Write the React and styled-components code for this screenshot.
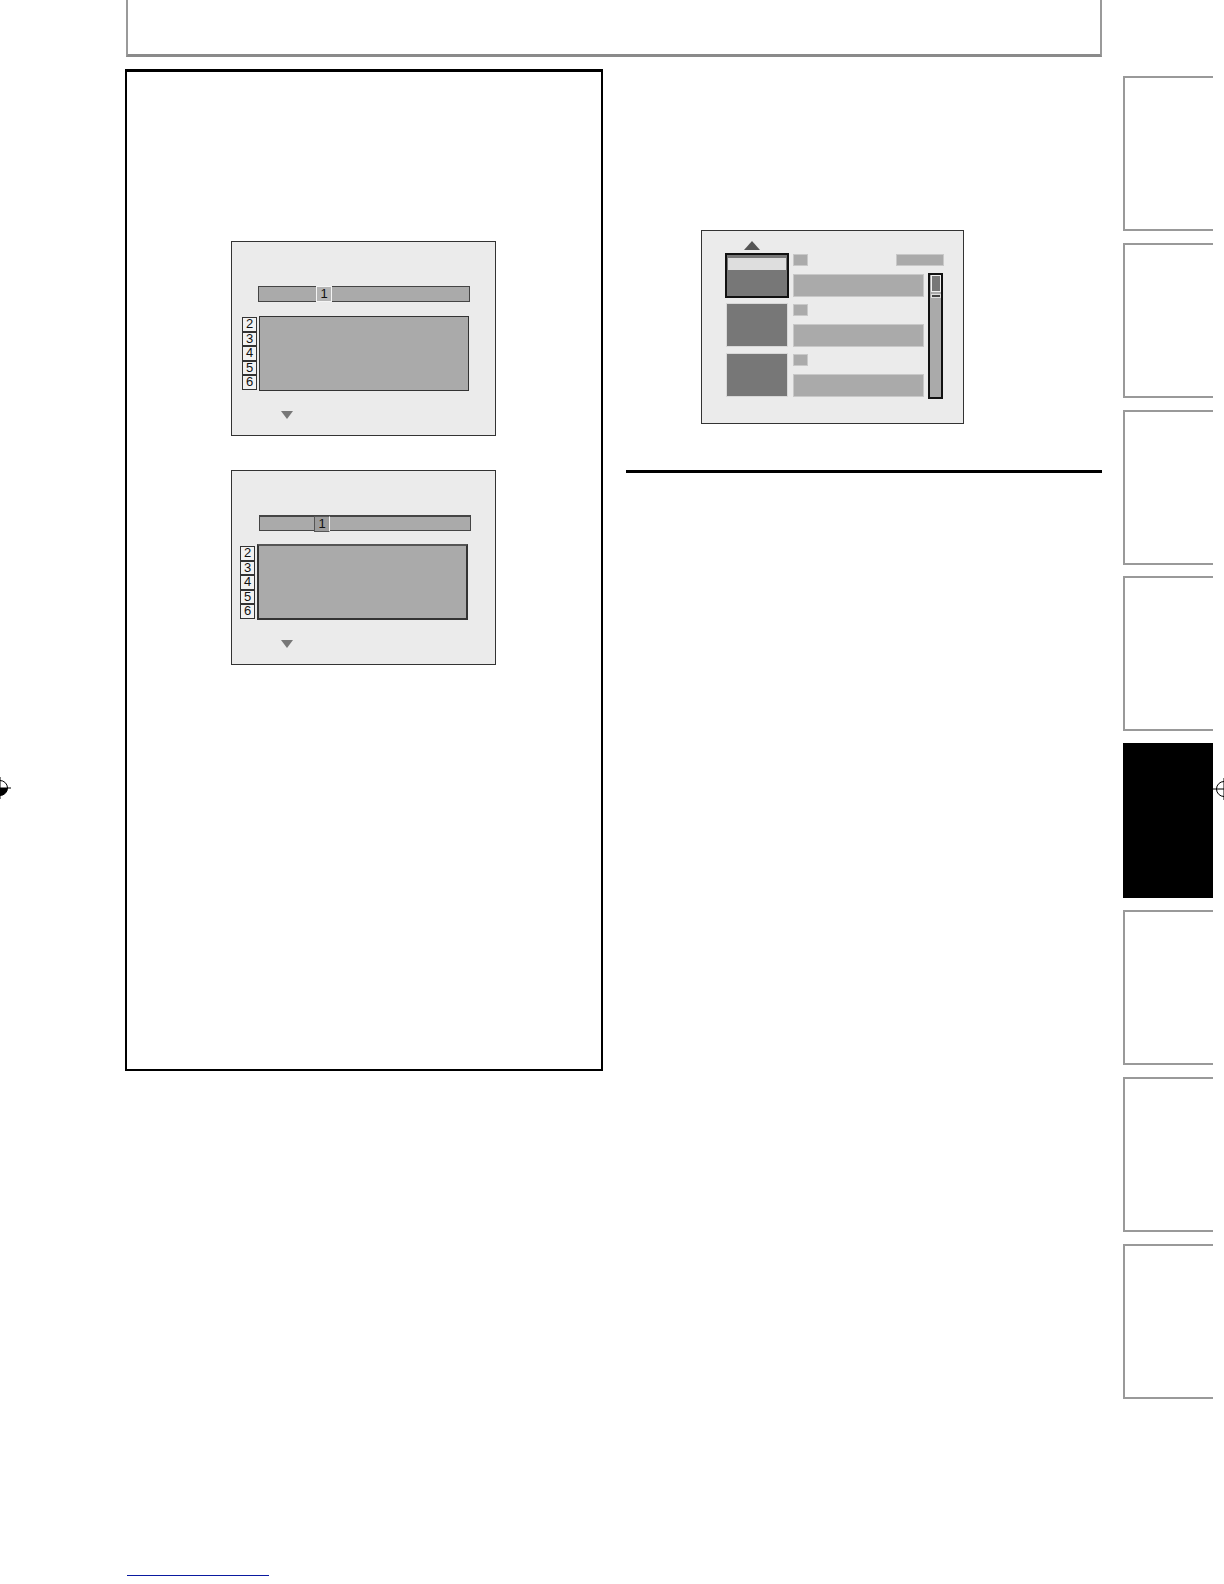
import React from "react"
import styled, { createGlobalStyle } from "styled-components"

const GlobalStyle = createGlobalStyle`
	html, body {
		margin: 0;
		padding: 0;
		background: #fff;
	}
	body {
		font-family: "Liberation Sans", Arial, sans-serif;
	}
	* {
		box-sizing: border-box;
	}
`

const Page = styled.div`
	position: relative;
	width: 1224px;
	height: 1584px;
	padding-left: 125px;
	display: flex;
	overflow: hidden;
	background: #fff;
`

const Main = styled.div`
	width: 977px;
	height: 100%;
	display: flex;
	flex-direction: column;
`

const Header = styled.div`
	margin-left: 1px;
	width: 976px;
	height: 57px;
	border: 2px solid #9a9a9a;
	border-top: none;
	border-bottom: 3px solid #8a8a8a;
`

const Body = styled.div`
	margin-top: 12px;
	display: flex;
	gap: 23px;
`

const NoteBox = styled.div`
	width: 478px;
	height: 1002px;
	border: 2px solid #000;
	border-top-width: 3px;
	padding: 169px 0 0 104px;
	display: flex;
	flex-direction: column;
	gap: 34px;
`

const RightCol = styled.div`
	width: 476px;
	display: flex;
	flex-direction: column;
`

const Screen = styled.div`
	width: ${(p) => p.$w || 265}px;
	height: ${(p) => p.$h || 195}px;
	background: #ebebeb;
	border: 1px solid #333;
	display: flex;
	flex-direction: column;
`

/* ---- title/chapter screen ---- */

const TitleBar = styled.div`
	margin: 44px 0 0 ${(p) => p.$left}px;
	width: 212px;
	height: 16px;
	background: #aaa;
	border: 1px solid #444;
	border-top-width: ${(p) => (p.$dark ? 2 : 1)}px;
	display: flex;
	padding-left: ${(p) => p.$tag}px;
`

const Tag = styled.span`
	width: 16px;
	height: 16px;
	margin-top: -1px;
	background: ${(p) => (p.$dark ? "#9c9c9c" : "#b4b4b4")};
	border: 1px solid ${(p) => (p.$dark ? "#555" : "#f4f4f4")};
	border-right-color: #f4f4f4;
	font-size: 13px;
	line-height: 14px;
	text-align: center;
	color: #111;
`

const ListRow = styled.div`
	margin: ${(p) => p.$top}px 0 0 ${(p) => p.$left}px;
	display: flex;
	gap: 2px;
`

const Numbers = styled.div`
	display: flex;
	flex-direction: column;
	padding-top: ${(p) => p.$pad}px;
`

const Num = styled.span`
	width: 15px;
	height: 14.6px;
	background: #f2f2f2;
	border: 1px solid #333;
	font-size: 13px;
	line-height: 12.6px;
	text-align: center;
	color: #111;
`

const Panel = styled.div`
	width: ${(p) => p.$w}px;
	height: ${(p) => p.$h}px;
	background: #aaa;
	border: ${(p) => p.$bw}px solid #333;
	border-top-color: ${(p) => (p.$bw > 1 ? "#555" : "#333")};
`

const DownArrow = styled.div`
	margin: 20px 0 0 49px;
	width: 0;
	height: 0;
	border-left: 6.5px solid transparent;
	border-right: 6.5px solid transparent;
	border-top: 8px solid #777;
`

const ChapterScreen = ({ barLeft, tag, listTop, listLeft, numPad, panel, dark }) => (
	<Screen>
		<TitleBar $left={barLeft} $tag={tag} $dark={dark}>
			<Tag $dark={dark}>1</Tag>
		</TitleBar>
		<ListRow $top={listTop} $left={listLeft}>
			<Numbers $pad={numPad}>
				{[2, 3, 4, 5, 6].map((n) => (
					<Num key={n}>{n}</Num>
				))}
			</Numbers>
			<Panel $w={panel.w} $h={panel.h} $bw={panel.bw} />
		</ListRow>
		<DownArrow />
	</Screen>
)

/* ---- browser screen ---- */

const BrowserScreen = styled(Screen)`
	margin: 161px 0 0 75px;
`

const UpArrow = styled.div`
	margin: 10px 0 0 42px;
	width: 0;
	height: 0;
	border-left: 8.5px solid transparent;
	border-right: 8.5px solid transparent;
	border-bottom: 9px solid #555;
`

const BrowserBody = styled.div`
	margin: 3px 0 0 23px;
	display: flex;
	gap: 4px;
`

const Entries = styled.div`
	display: flex;
	flex-direction: column;
	gap: 5px;
`

const Entry = styled.div`
	display: flex;
	gap: 4px;
	height: 45px;
`

const Thumb = styled.div`
	width: ${(p) => (p.$sel ? 64 : 62)}px;
	height: ${(p) => (p.$sel ? 45 : 44)}px;
	margin: ${(p) => (p.$sel ? "0" : "0 1px")};
	background: #777;
	border: ${(p) => (p.$sel ? "2px solid #111" : "1px solid #d8d8d8")};
	padding: 3px 1px 0;
`

const ThumbLabel = styled.div`
	height: 12px;
	background: #dedede;
`

const Info = styled.div`
	width: 131px;
	padding-top: 1px;
	display: flex;
	flex-direction: column;
	gap: 8px;
`

const InfoHead = styled.div`
	width: ${(p) => (p.$wide ? 151 : 131)}px;
	height: 12px;
	display: flex;
	justify-content: space-between;
`

const Chip = styled.span`
	width: ${(p) => p.$w}px;
	height: 12px;
	background: #aaa;
	border: 1px solid #c8c8c8;
`

const InfoBar = styled.div`
	height: 23px;
	background: #aaa;
	border: 1px solid #c8c8c8;
`

const Scroll = styled.div`
	margin-top: 20px;
	width: 15px;
	height: 126px;
	background: #aaa;
	border: 2px solid #111;
	padding: 0 0 0 1px;
	display: flex;
	flex-direction: column;
	gap: 2px;
`

const ScrollThumb = styled.div`
	width: 10px;
	height: 17px;
	background: #777;
	border: 1px solid #f0f0f0;
`

const ScrollMark = styled.div`
	width: 10px;
	height: 4px;
	background: #444;
	border: 1px solid #e0e0e0;
`

const Rule = styled.div`
	margin-top: 46px;
	width: 476px;
	height: 3px;
	background: #000;
`

const Footer = styled.div`
	margin: auto 0 8px 2px;
	width: 142px;
	height: 1px;
	background: #0a1aa0;
`

/* ---- side index tabs ---- */

const Tabs = styled.div`
	margin: 76px 0 0 21px;
	display: flex;
	flex-direction: column;
	gap: 11.8px;
`

const Tab = styled.div`
	flex: none;
	width: 90px;
	height: 155px;
	border: 2px solid #999;
	border-right: none;
	background: ${(p) => (p.$active ? "#000" : "#fff")};
	border-color: ${(p) => (p.$active ? "#000" : "#999")};
`

const RegMark = styled.svg`
	position: absolute;
	top: ${(p) => p.$y - 12}px;
	left: ${(p) => p.$x - 12}px;
`

const Mark = ({ x, y, filled }) => (
	<RegMark $x={x} $y={y} width="24" height="24" viewBox="0 0 24 24">
		<circle cx="12" cy="12" r="7.5" fill="none" stroke="#000" strokeWidth="1" />
		{filled && <path d="M12 12 L12 4.5 A7.5 7.5 0 0 0 4.5 12 Z M12 12 L12 19.5 A7.5 7.5 0 0 0 19.5 12 Z" fill="#000" />}
		<line x1="1" y1="12" x2="23" y2="12" stroke="#000" strokeWidth="1" />
		<line x1="12" y1="1" x2="12" y2="23" stroke="#000" strokeWidth="1" />
	</RegMark>
)

const App = () => {
	return (
		<>
			<GlobalStyle />
			<Page>
				<Main>
					<Header />
					<Body>
						<NoteBox>
							<ChapterScreen
								barLeft={26}
								tag={57}
								listTop={14}
								listLeft={10}
								numPad={1}
								panel={{ w: 210, h: 75, bw: 1 }}
							/>
							<ChapterScreen
								barLeft={27}
								tag={54}
								listTop={13}
								listLeft={8}
								numPad={2}
								panel={{ w: 211, h: 76, bw: 2 }}
								dark
							/>
						</NoteBox>
						<RightCol>
							<BrowserScreen $w={263} $h={194}>
								<UpArrow />
								<BrowserBody>
									<Entries>
										<Entry>
											<Thumb $sel>
												<ThumbLabel />
											</Thumb>
											<Info>
												<InfoHead $wide>
													<Chip $w={15} />
													<Chip $w={48} />
												</InfoHead>
												<InfoBar />
											</Info>
										</Entry>
										<Entry>
											<Thumb />
											<Info>
												<InfoHead>
													<Chip $w={15} />
												</InfoHead>
												<InfoBar />
											</Info>
										</Entry>
										<Entry>
											<Thumb />
											<Info>
												<InfoHead>
													<Chip $w={15} />
												</InfoHead>
												<InfoBar />
											</Info>
										</Entry>
									</Entries>
									<Scroll>
										<ScrollThumb />
										<ScrollMark />
									</Scroll>
								</BrowserBody>
							</BrowserScreen>
							<Rule />
						</RightCol>
					</Body>
					<Footer />
				</Main>
				<Tabs>
					{[0, 1, 2, 3, 4, 5, 6, 7].map((i) => (
						<Tab key={i} $active={i === 4} />
					))}
				</Tabs>
				<Mark x={0} y={788} filled />
				<Mark x={1224} y={789} />
			</Page>
		</>
	)
}

export default App
